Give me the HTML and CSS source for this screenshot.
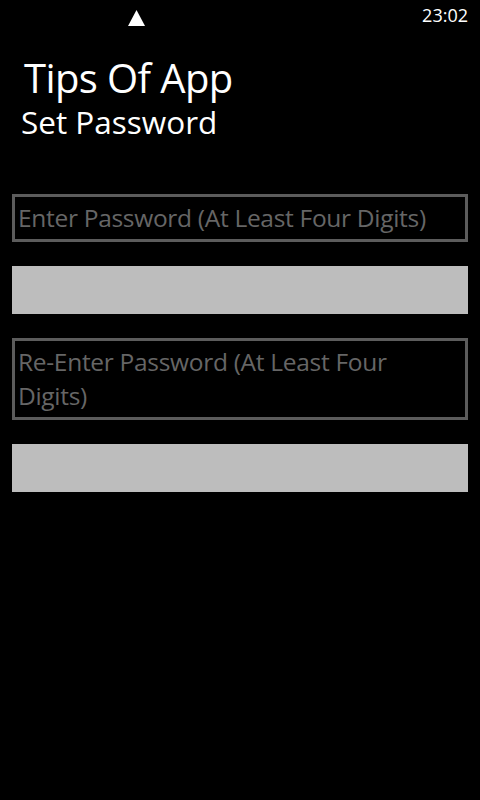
FILE: index.html
```html
<!DOCTYPE html>
<html>
<head>
<meta charset="utf-8">
<link rel="stylesheet" href="styles.css">
</head>
<body>
<div class="status">
  <svg class="signal" width="17" height="16" viewBox="0 0 17 16"><polygon points="8.5,0 17,16 0,16" fill="#fff"/></svg>
  <span class="time">23:02</span>
</div>
<div class="header">
  <div class="app-title">Tips Of App</div>
  <div class="page-title">Set Password</div>
</div>
<div class="form">
  <div class="label-box">Enter Password (At Least Four Digits)</div>
  <div class="input-bar"></div>
  <div class="label-box">Re-Enter Password (At Least Four Digits)</div>
  <div class="input-bar"></div>
</div>
</body>
</html>
```
FILE: styles.css
```css
html, body {
  margin: 0;
  padding: 0;
  background: #000;
  width: 480px;
  height: 800px;
  overflow: hidden;
  font-family: "Open Sans", "Noto Sans", sans-serif;
  color: #fff;
}
.status {
  height: 32px;
  display: flex;
  align-items: flex-start;
}
.signal {
  margin-left: 128px;
  margin-top: 10px;
}
.time {
  margin-left: auto;
  margin-right: 12px;
  margin-top: 3px;
  font-size: 18px;
  line-height: 24px;
}
.header {
  padding-left: 24px;
  margin-top: 22px;
}
.app-title {
  font-size: 40px;
  line-height: 48px;
  letter-spacing: -0.6px;
}
.page-title {
  font-size: 31.5px;
  line-height: 40px;
  margin-left: -3px;
}
.form {
  padding: 0 12px;
  margin-top: 52px;
  display: flex;
  flex-direction: column;
}
.label-box {
  border: 3px solid #5c5c5c;
  color: #666;
  font-size: 24.5px;
  line-height: 34px;
  padding: 4px 30px 4px 3px;
  letter-spacing: -0.3px;
}
.input-bar {
  height: 48px;
  background: #bdbdbd;
  margin-top: 24px;
  margin-bottom: 24px;
}
```
